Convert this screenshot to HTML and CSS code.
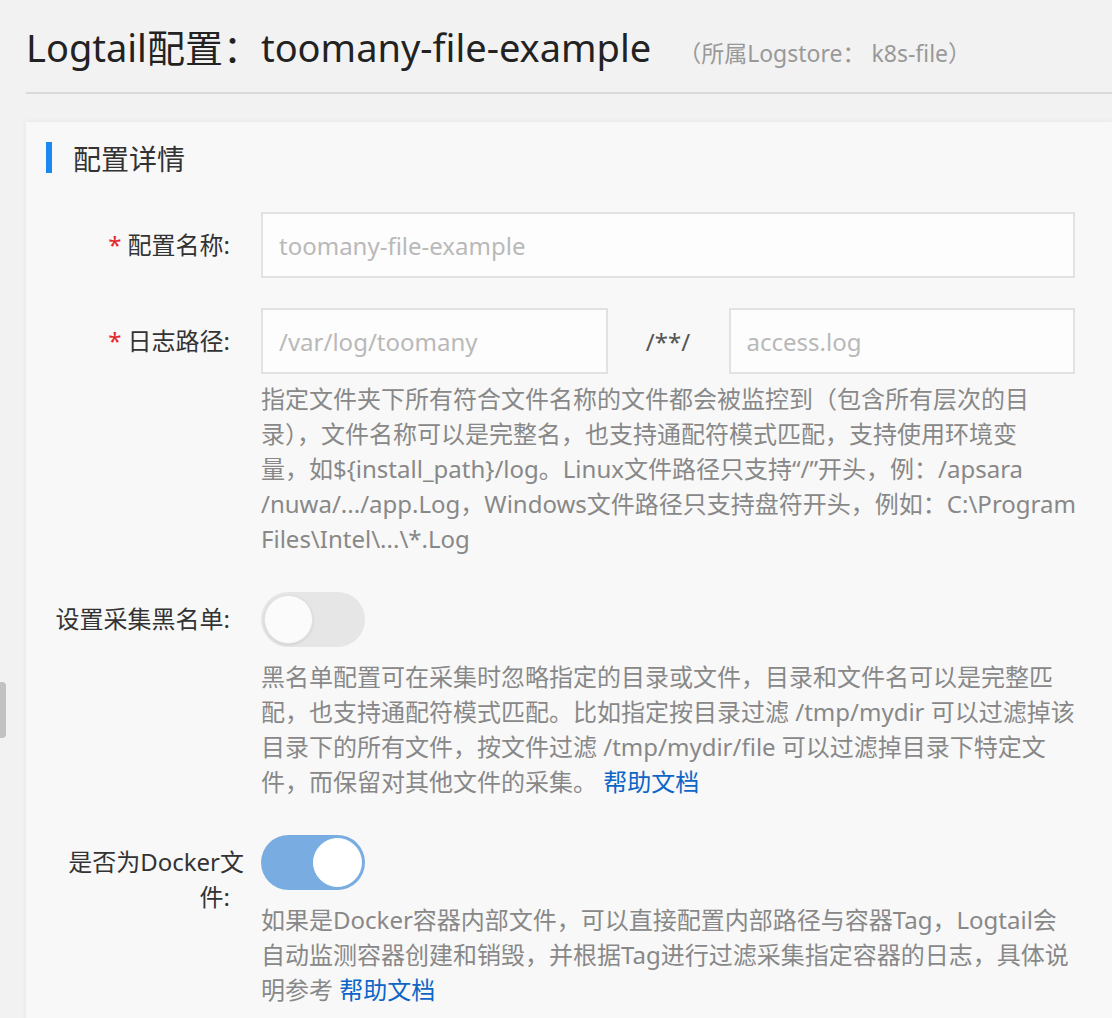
FILE: index.html
```html
<!DOCTYPE html>
<html lang="zh-CN">
<head>
  <meta charset="UTF-8">
  <meta name="viewport" content="width=device-width, initial-scale=1.0">
  <title>Logtail配置</title>
  <link rel="stylesheet" href="styles.css">
</head>
<body>
  <div class="side-tab"></div>

  <div class="page">
    <div class="page-header">
      <h1>Logtail配置：toomany-file-example</h1>
      <span class="sub-title">（所属Logstore： k8s-file）</span>
    </div>

    <div class="card">
      <div class="card-title">配置详情</div>

      <div class="form-item">
        <label class="form-label required">配置名称</label>
        <div class="form-control">
          <input class="input" type="text" value="toomany-file-example" readonly>
        </div>
      </div>

      <div class="form-item">
        <label class="form-label required">日志路径</label>
        <div class="form-control">
          <div class="path-row">
            <input class="input" type="text" value="/var/log/toomany" readonly>
            <span class="path-sep">/**/</span>
            <input class="input" type="text" value="access.log" readonly>
          </div>
          <p class="help nowrap">指定文件夹下所有符合文件名称的文件都会被监控到（包含所有层次的目<br>录），文件名称可以是完整名，也支持通配符模式匹配，支持使用环境变<br>量，如${install_path}/log。Linux文件路径只支持“/”开头，例：/apsara<br>/nuwa/.../app.Log，Windows文件路径只支持盘符开头，例如：C:\Program<br>Files\Intel\...\*.Log</p>
        </div>
      </div>

      <div class="form-item">
        <label class="form-label">设置采集黑名单</label>
        <div class="form-control">
          <div class="switch-wrap">
            <span class="switch"><span class="knob"></span></span>
          </div>
          <p class="help">黑名单配置可在采集时忽略指定的目录或文件，目录和文件名可以是完整匹配，也支持通配符模式匹配。比如指定按目录过滤 /tmp/mydir 可以过滤掉该目录下的所有文件，按文件过滤 /tmp/mydir/file 可以过滤掉目录下特定文件，而保留对其他文件的采集。 <a href="#">帮助文档</a></p>
        </div>
      </div>

      <div class="form-item">
        <label class="form-label">是否为Docker文件</label>
        <div class="form-control">
          <div class="switch-wrap">
            <span class="switch on"><span class="knob"></span></span>
          </div>
          <p class="help">如果是Docker容器内部文件，可以直接配置内部路径与容器Tag，Logtail会自动监测容器创建和销毁，并根据Tag进行过滤采集指定容器的日志，具体说明参考 <a href="#">帮助文档</a></p>
        </div>
      </div>
    </div>
  </div>
</body>
</html>
```

FILE: styles.css
```css
* {
  margin: 0;
  padding: 0;
  box-sizing: border-box;
  font-family: 'Noto Sans', 'Noto Sans CJK SC', sans-serif;
}

body {
  background: #f2f2f2;
  color: #333;
  overflow: hidden;
}

.page {
  padding-left: 26px;
}

.page-header {
  display: flex;
  align-items: baseline;
  padding: 22px 0 20px;
  border-bottom: 2px solid #dadada;
}

h1 {
  font-size: 38px;
  font-weight: 400;
  line-height: 50px;
  color: #222;
}

.sub-title {
  margin-left: 27px;
  font-size: 23px;
  color: #999;
}

.card {
  margin-top: 28px;
  padding: 20px 37px 40px 20px;
  background: #f8f8f8;
  box-shadow: 0 0 6px rgba(0, 0, 0, 0.06);
}

.card-title {
  display: flex;
  align-items: center;
  height: 31px;
  margin-bottom: 39px;
  font-size: 28px;
  color: #333;
}

.card-title::before {
  content: "";
  width: 6px;
  height: 31px;
  margin-right: 21px;
  background: #1b87f0;
}

.form-item {
  display: flex;
  margin-bottom: 30px;
}

.form-label {
  flex: none;
  width: 215px;
  padding: 15px 17px 0 0;
  text-align: right;
  font-size: 24px;
  line-height: 35px;
  color: #333;
}

.form-label::after {
  content: ":";
  margin-right: 14px;
}

.form-label.required::before {
  content: "*";
  margin-right: 6px;
  color: #e5252a;
}

.form-control {
  flex: 1;
  min-width: 0;
}

.input {
  display: block;
  width: 100%;
  height: 66px;
  padding: 0 16px;
  border: 2px solid #e2e2e2;
  background: #fdfdfd;
  font-size: 24px;
  color: #b9b9b9;
  outline: none;
}

.path-row {
  display: flex;
  align-items: center;
}

.path-row .input {
  flex: 1;
  min-width: 0;
}

.path-sep {
  flex: none;
  width: 121px;
  text-align: center;
  font-size: 24px;
  color: #555;
}

.help {
  margin-top: 7px;
  font-size: 24px;
  line-height: 35px;
  color: #888;
}

.help.nowrap {
  white-space: nowrap;
}

.help a {
  color: #0d66c7;
  text-decoration: none;
}

.switch-wrap {
  display: flex;
  align-items: center;
  height: 66px;
}

.switch {
  display: flex;
  align-items: center;
  width: 104px;
  height: 55px;
  padding: 3px;
  border-radius: 28px;
  background: #e6e6e6;
}

.switch .knob {
  width: 49px;
  height: 49px;
  border-radius: 50%;
  background: #fbfbfb;
  border: 1px solid #e2e2e2;
  box-shadow: 0 1px 3px rgba(0, 0, 0, 0.1);
}

.switch.on {
  justify-content: flex-end;
  background: #79ade2;
}

.switch.on .knob {
  background: #fff;
  border-color: #fff;
  box-shadow: none;
}

.side-tab {
  position: fixed;
  left: 0;
  top: 682px;
  width: 6px;
  height: 56px;
  border-radius: 0 4px 4px 0;
  background: #c2c2c2;
}
```
